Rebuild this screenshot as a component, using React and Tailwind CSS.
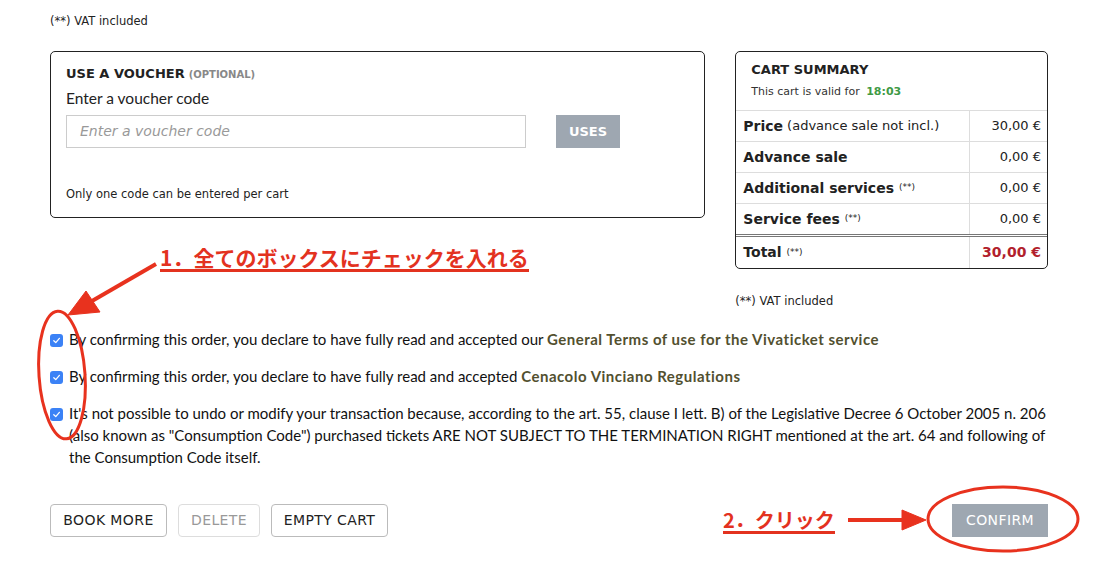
import React from "react";

const Check = () => (
  <span className="mt-[6px] flex h-[13px] w-[13px] shrink-0 items-center justify-center rounded-[3px] bg-[#3b82f6]">
    <svg width="9" height="9" viewBox="0 0 10 10" fill="none">
      <path d="M2 5.2 L4.2 7.4 L8.2 2.6" stroke="white" strokeWidth="1.4" strokeLinecap="round" strokeLinejoin="round" />
    </svg>
  </span>
);

const Row = ({ label, extra, note, value, total }) => (
  <div className={`flex ${total ? "h-[34px] border-t-[3px] border-double border-[#777]" : "h-[31px] border-t border-[#ddd]"}`}>
    <div className="flex flex-1 items-center pl-[7px] text-[14px] text-[#222]">
      <span className="font-bold">{label}</span>
      {extra && <span className="ml-[4px] text-[13px]">{extra}</span>}
      {note && <span className="ml-[5px] text-[9px]">(**)</span>}
    </div>
    <div className={`flex w-[78px] items-center justify-end border-l border-[#ddd] pr-[6px] ${total ? "text-[14px] font-bold text-[#b21f2d]" : "text-[13px] text-[#222]"}`}>
      {value}
    </div>
  </div>
);

export default function App() {
  const mont = "font-['DejaVu_Sans','Liberation_Sans',sans-serif]";
  const btn = "flex h-[33px] items-center justify-center rounded-[4px] border text-[14px] tracking-[0.4px]";
  return (
    <div className={`relative h-[564px] w-[1098px] overflow-hidden bg-white text-[#222] ${mont}`}>
      <div className="px-[50px] pt-[14px]">
        <p className="text-[11.5px] leading-[14px]">(**) VAT included</p>
        <div className="mt-[23px] flex gap-[30px]">
          {/* Voucher */}
          <div className="h-[167px] w-[656px] rounded-[5px] border border-[#222] px-[15px] pt-[13px]">
            <div className="flex items-baseline text-[13px] font-bold leading-[18px]">
              USE A VOUCHER
              <span className="ml-[4px] text-[10px] font-bold text-[#888]">(OPTIONAL)</span>
            </div>
            <div className="mt-[5px] font-['Lato',sans-serif] text-[15.5px] leading-[18px]">Enter a voucher code</div>
            <div className="mt-[8px] flex">
              <div className="flex h-[33px] w-[460px] items-center border border-[#ccc] pl-[13px] text-[14px] italic text-[#999]">
                Enter a voucher code
              </div>
              <div className="ml-[30px] flex h-[33px] w-[64px] items-center justify-center bg-[#9ea7b1] text-[13px] font-bold text-white">
                USES
              </div>
            </div>
            <p className="mt-[39px] text-[11.5px] leading-[14px]">Only one code can be entered per cart</p>
          </div>
          {/* Cart summary */}
          <div className="w-[313px]">
            <div className="overflow-hidden rounded-[5px] border border-[#222]">
              <div className="px-[15px] pb-[11px] pt-[9px]">
                <div className="text-[13px] font-bold leading-[18px]">CART SUMMARY</div>
                <div className="mt-[6px] text-[11px] leading-[14px] text-[#333]">
                  This cart is valid for <span className="ml-[3px] font-bold text-[#3f9a45]">18:03</span>
                </div>
              </div>
              <Row label="Price" extra="(advance sale not incl.)" value="30,00 €" />
              <Row label="Advance sale" value="0,00 €" />
              <Row label="Additional services" note value="0,00 €" />
              <Row label="Service fees" note value="0,00 €" />
              <Row label="Total" note value="30,00 €" total />
            </div>
            <p className="mt-[25px] text-[11.5px] leading-[14px]">(**) VAT included</p>
          </div>
        </div>

        {/* Checkboxes */}
        <div className="mt-[20px] flex flex-col gap-[15px] font-['Lato',sans-serif] text-[15px] leading-[22px] text-[#111]">
          <div className="flex gap-[6px]">
            <Check />
            <p>
              By confirming this order, you declare to have fully read and accepted our{" "}
              <span className="font-bold tracking-[0.5px] text-[#52502f]">General Terms of use for the Vivaticket service</span>
            </p>
          </div>
          <div className="flex gap-[6px]">
            <Check />
            <p>
              By confirming this order, you declare to have fully read and accepted{" "}
              <span className="font-bold tracking-[0.5px] text-[#52502f]">Cenacolo Vinciano Regulations</span>
            </p>
          </div>
          <div className="flex gap-[6px]">
            <Check />
            <p className="whitespace-nowrap">
              It's not possible to undo or modify your transaction because, according to the art. 55, clause I lett. B) of the Legislative Decree 6 October 2005 n. 206
              <br />
              (also known as "Consumption Code") purchased tickets ARE NOT SUBJECT TO THE TERMINATION RIGHT mentioned at the art. 64 and following of
              <br />
              the Consumption Code itself.
            </p>
          </div>
        </div>

        {/* Buttons */}
        <div className="mt-[36px] flex items-center">
          <div className="flex gap-[11px]">
            <div className={`${btn} w-[117px] border-[#bbb]`}>BOOK MORE</div>
            <div className={`${btn} w-[82px] border-[#ddd] text-[#999]`}>DELETE</div>
            <div className={`${btn} w-[117px] border-[#bbb]`}>EMPTY CART</div>
          </div>
          <div className="ml-auto flex h-[33px] w-[96px] items-center justify-center bg-[#9ea7b1] text-[14px] tracking-[0.4px] text-white">CONFIRM</div>
        </div>
      </div>

      {/* Annotations */}
      <div className="absolute left-[160px] top-[245px] border-b-[3px] border-[#e3321f] font-['Noto_Sans_CJK_JP',sans-serif] text-[21px] font-bold leading-[24px] text-[#e3321f]">
        1．全てのボックスにチェックを入れる
      </div>
      <div className="absolute left-[723px] top-[508px] border-b-[3px] border-[#e3321f] font-['Noto_Sans_CJK_JP',sans-serif] text-[20px] font-bold leading-[23px] text-[#e3321f]">
        2．クリック
      </div>
      <svg className="pointer-events-none absolute left-0 top-0" width="1098" height="564">
        <g stroke="#e8321e" fill="none">
          <line x1="156" y1="264" x2="92" y2="301" strokeWidth="4" />
          <polygon points="68,315 86,291 100,312" fill="#e8321e" strokeWidth="1" />
          <ellipse cx="62" cy="375" rx="23" ry="64" strokeWidth="3" transform="rotate(-4 62 375)" />
          <line x1="848" y1="520" x2="904" y2="520" strokeWidth="4" />
          <polygon points="926,520 902,510 902,530" fill="#e8321e" strokeWidth="1" />
          <ellipse cx="1003" cy="519" rx="75" ry="32" strokeWidth="3" />
        </g>
      </svg>
    </div>
  );
}
